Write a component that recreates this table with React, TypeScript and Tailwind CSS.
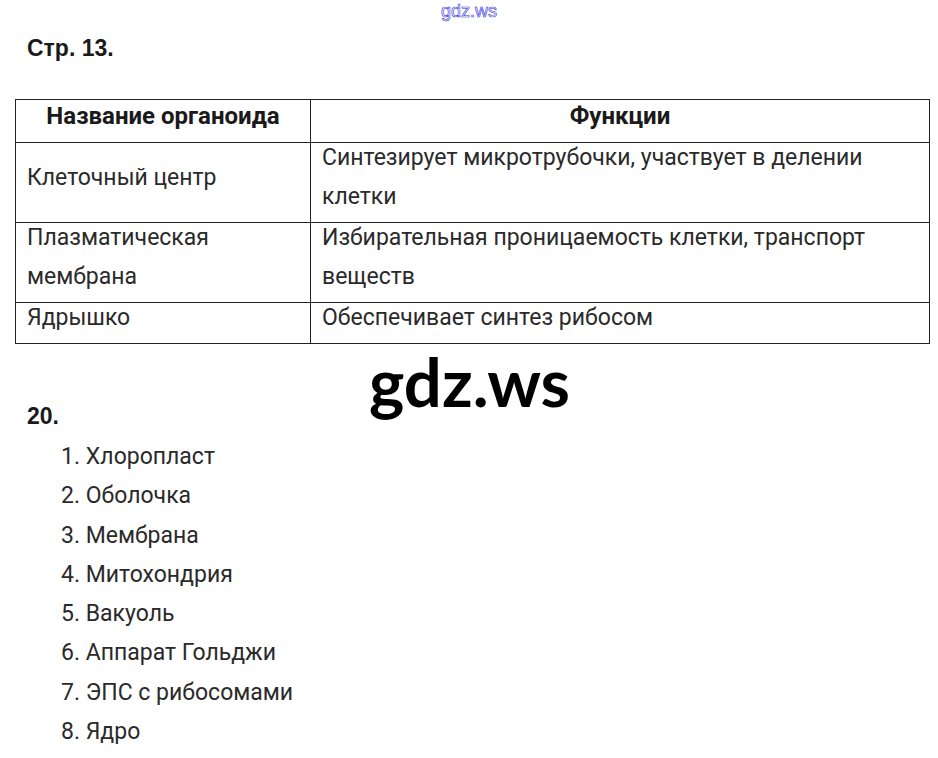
import React from 'react';

const rows = [
  { name: ['Клеточный центр'], func: ['Синтезирует микротрубочки, участвует в делении', 'клетки'], center: true },
  { name: ['Плазматическая', 'мембрана'], func: ['Избирательная проницаемость клетки, транспорт', 'веществ'] },
  { name: ['Ядрышко'], func: ['Обеспечивает синтез рибосом'] },
];

const items = [
  'Хлоропласт',
  'Оболочка',
  'Мембрана',
  'Митохондрия',
  'Вакуоль',
  'Аппарат Гольджи',
  'ЭПС с рибосомами',
  'Ядро',
];

export default function App() {
  return (
    <div className="relative w-[938px] h-[758px] bg-white text-[#2a2a2a] font-['Roboto',sans-serif] overflow-hidden">
      {/* small watermark */}
      <div className="flex justify-center pt-[1px] h-[26px]">
        <span className="text-[18px] leading-[20px] font-['Liberation_Sans',sans-serif] text-white [-webkit-text-stroke:0.6px_#2c2ce0]">gdz.ws</span>
      </div>

      <h2 className="pl-[27px] pt-[9px] text-[23px] leading-[26px] font-bold font-['Liberation_Sans',sans-serif] text-[#1a1a1a]">Стр. 13.</h2>

      <table className="mt-[38px] ml-[15px] w-[915px] border-collapse text-[23px]">
        <thead>
          <tr>
            <th className="w-[295px] border border-[#222] h-[43px] p-0 pb-[10px] text-[24px] leading-[28px] font-bold text-center text-[#1a1a1a]">Название органоида</th>
            <th className="border border-[#222] h-[43px] p-0 pb-[10px] text-[24px] leading-[28px] font-bold text-center text-[#1a1a1a]">Функции</th>
          </tr>
        </thead>
        <tbody>
          {rows.map((r, i) => (
            <tr key={i}>
              <td className={`border border-[#222] px-[11px] pt-0 pb-[6px] leading-[39px] ${r.center ? 'align-middle' : 'align-top'}`}>
                <div className="-mt-[5px]">
                  {r.name.map((l, j) => <div key={j}>{l}</div>)}
                </div>
              </td>
              <td className="border border-[#222] px-[11px] pt-0 pb-[6px] leading-[39px] align-top">
                <div className="-mt-[5px]">
                  {r.func.map((l, j) => <div key={j}>{l}</div>)}
                </div>
              </td>
            </tr>
          ))}
        </tbody>
      </table>

      <h2 className="pl-[27px] mt-[59px] text-[23px] leading-[26px] font-bold font-['Liberation_Sans',sans-serif] text-[#1a1a1a]">20.</h2>

      <ol className="pl-[61px] mt-[8px] text-[23px] leading-[39.3px]">
        {items.map((t, i) => (
          <li key={i}>{i + 1}. {t}</li>
        ))}
      </ol>

      {/* big watermark */}
      <div className="absolute left-[369px] top-[345px] text-[67px] leading-[72px] font-bold font-['Lato',sans-serif] text-black">gdz.ws</div>
    </div>
  );
}
